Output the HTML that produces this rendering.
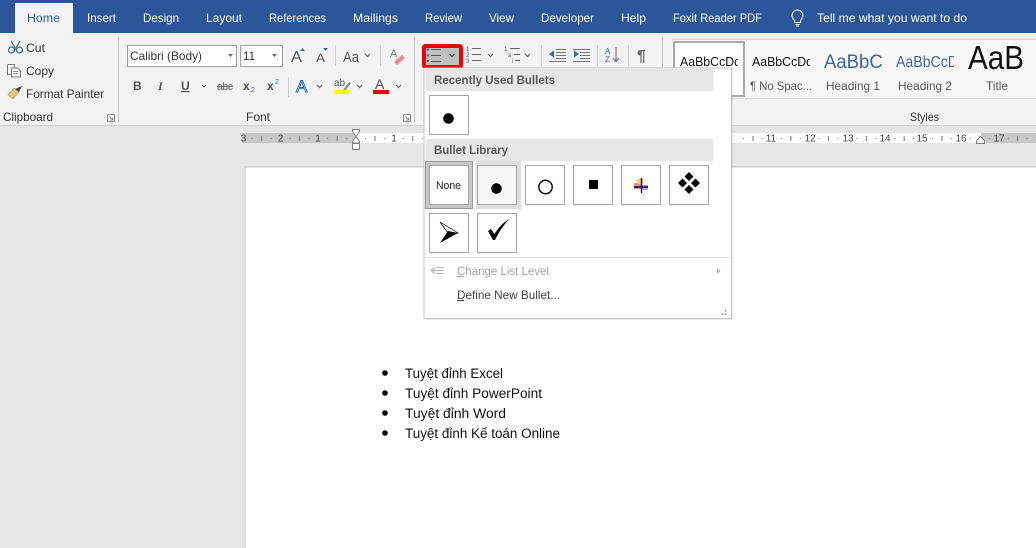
<!DOCTYPE html>
<html><head><meta charset="utf-8"><style>
html,body{margin:0;padding:0;background:#e6e6e6;overflow:hidden}
svg{display:block}
text{font-family:"Liberation Sans","DejaVu Sans",sans-serif;font-size:12px;fill:#444}
.w{fill:#fff}
.d{fill:#333}
.doc{font-size:13.5px;fill:#111}
.r{font-size:10px;fill:#444;text-anchor:middle}
.h{font-weight:bold;fill:#5a5a5a}
.c{fill:none;stroke:#666;stroke-width:1.2}
.cell{fill:#fff;stroke:#a6a6a6}
</style></head><body>
<svg width="1036" height="548" viewBox="0 0 1036 548" xmlns="http://www.w3.org/2000/svg">
<defs>
<pattern id="tk" patternUnits="userSpaceOnUse" x="356" y="133" width="37.8" height="10">
<rect x="9" y="5" width="1" height="1" fill="#777"/><rect x="18.5" y="3" width="1" height="5" fill="#777"/><rect x="28" y="5" width="1" height="1" fill="#777"/>
</pattern>
<clipPath id="g1"><rect x="676" y="44" width="62" height="50"/></clipPath>
<clipPath id="g2"><rect x="752" y="44" width="58" height="50"/></clipPath>
<clipPath id="g3"><rect x="824" y="44" width="58" height="50"/></clipPath>
<clipPath id="g4"><rect x="896" y="44" width="58" height="50"/></clipPath>
<clipPath id="g5"><rect x="964" y="45" width="62" height="50"/></clipPath>
</defs>

<!-- backgrounds -->
<rect width="1036" height="548" fill="#e6e6e6"/>
<rect width="1036" height="33" fill="#2b579a"/>
<rect y="33" width="1036" height="92" fill="#f3f3f3"/>
<rect y="125" width="1036" height="1" fill="#cfcfcf"/>
<rect x="15" y="3" width="58" height="31" fill="#f3f3f3"/>

<!-- tabs -->
<text x="27" y="22" textLength="33" lengthAdjust="spacingAndGlyphs" style="fill:#2b579a">Home</text>
<text class="w" x="87" y="22" textLength="29" lengthAdjust="spacingAndGlyphs">Insert</text>
<text class="w" x="143" y="22" textLength="36" lengthAdjust="spacingAndGlyphs">Design</text>
<text class="w" x="206" y="22" textLength="36" lengthAdjust="spacingAndGlyphs">Layout</text>
<text class="w" x="269" y="22" textLength="57" lengthAdjust="spacingAndGlyphs">References</text>
<text class="w" x="353" y="22" textLength="45" lengthAdjust="spacingAndGlyphs">Mailings</text>
<text class="w" x="425" y="22" textLength="37" lengthAdjust="spacingAndGlyphs">Review</text>
<text class="w" x="489" y="22" textLength="25" lengthAdjust="spacingAndGlyphs">View</text>
<text class="w" x="541" y="22" textLength="53" lengthAdjust="spacingAndGlyphs">Developer</text>
<text class="w" x="621" y="22" textLength="25" lengthAdjust="spacingAndGlyphs">Help</text>
<text class="w" x="673" y="22" textLength="89" lengthAdjust="spacingAndGlyphs">Foxit Reader PDF</text>
<path d="M794.500 20.500c-1-1.300-2.500-2.500-2.500-5a5.500 5.500 0 0 1 11 0c0 2.500-1.500 3.700-2.500 5v2h-6zM795.500 24.500h4M796 26h3" fill="none" stroke="#fff" stroke-width="1"/>
<text class="w" x="817" y="22" textLength="150" lengthAdjust="spacingAndGlyphs">Tell me what you want to do</text>

<!-- clipboard -->
<path d="M11 41l6 10M20 41l-6 10" stroke="#777" stroke-width="1.500" fill="none"/>
<circle cx="11.500" cy="50" r="3" fill="none" stroke="#2b6ca8" stroke-width="1.200"/>
<circle cx="19.500" cy="50" r="3" fill="none" stroke="#2b6ca8" stroke-width="1.200"/>
<text class="d" x="26" y="52" textLength="19" lengthAdjust="spacingAndGlyphs">Cut</text>
<path d="M7.500 64.500h7l0 3M7.500 64.500v10h4" fill="#fff" stroke="#777"/>
<path d="M11.500 68h6l3 3v6h-9z" fill="#fff" stroke="#777"/>
<path d="M13 71.500h5M13 73.500h5" stroke="#999"/>
<text class="d" x="26" y="75" textLength="28" lengthAdjust="spacingAndGlyphs">Copy</text>
<path d="M8 95l6-7 5 4-6 7z" fill="#e4c27a" stroke="#b89a5a" stroke-width=".6"/>
<path d="M15 89l7-3-3 6z" fill="#444"/>
<text class="d" x="26" y="98" textLength="78" lengthAdjust="spacingAndGlyphs">Format Painter</text>
<text x="3" y="121" textLength="50" lengthAdjust="spacingAndGlyphs" class="d">Clipboard</text>
<path d="M107.500 114.500h7v7h-7zM109.500 116.500l3.500 3.500M113 117.500v2.500h-2.500" fill="none" stroke="#777" stroke-width=".8"/>
<rect x="118" y="37" width="1" height="85" fill="#c8c8c8"/>

<!-- font group -->
<rect x="127.500" y="45.500" width="109" height="21" fill="#fff" stroke="#a0a0a0"/>
<text class="d" x="130" y="60" textLength="72" lengthAdjust="spacingAndGlyphs">Calibri (Body)</text>
<path d="M228 54h5l-2.500 3z" fill="#666"/>
<rect x="240.500" y="45.500" width="42" height="21" fill="#fff" stroke="#a0a0a0"/>
<text class="d" x="243" y="60" textLength="12" lengthAdjust="spacingAndGlyphs">11</text>
<path d="M272 54h5l-2.500 3z" fill="#666"/>
<text x="291" y="62" textLength="11" lengthAdjust="spacingAndGlyphs" style="font-size:16px;fill:#555">A</text>
<path d="M300 51h5l-2.500-3z" fill="#2b6ca8"/>
<text x="316" y="62" textLength="9" lengthAdjust="spacingAndGlyphs" style="font-size:12px;fill:#555">A</text>
<path d="M323 48h5l-2.500 3z" fill="#2b6ca8"/>
<rect x="335" y="45" width="1" height="21" fill="#d0d0d0"/>
<text x="343" y="62" textLength="16" lengthAdjust="spacingAndGlyphs" style="font-size:15px;fill:#555">Aa</text>
<path d="M365 54l2.500 2.500 2.500-2.500" class="c"/>
<rect x="380" y="45" width="1" height="21" fill="#d0d0d0"/>
<text x="390" y="57" style="font-size:11px;fill:#777">A</text>
<path d="M394 62l8-7 3 3-8 7z" fill="#e88a94"/>
<text x="133" y="90" style="font-size:12px;font-weight:bold;fill:#555">B</text>
<text x="158" y="90" style="font-size:12px;font-style:italic;font-family:'Liberation Serif',serif;font-weight:bold;fill:#555">I</text>
<text x="181" y="90" style="font-size:12px;font-weight:bold;fill:#555;text-decoration:underline">U</text>
<path d="M202 85l2 2 2-2" class="c"/>
<text x="217" y="90" textLength="16" lengthAdjust="spacingAndGlyphs" style="font-size:11px;fill:#666">abc</text>
<rect x="217" y="86" width="16" height="1" fill="#666"/>
<text x="243" y="90" style="font-size:12px;font-weight:bold;fill:#555">x</text>
<text x="251" y="92" style="font-size:7px;fill:#2b6ca8">2</text>
<text x="267" y="90" style="font-size:12px;font-weight:bold;fill:#555">x</text>
<text x="275" y="84" style="font-size:7px;fill:#2b6ca8">2</text>
<rect x="288" y="77" width="1" height="20" fill="#d0d0d0"/>
<text x="296" y="92" style="font-size:17px;fill:#cfe0f2;stroke:#2b6ca8;stroke-width:.9">A</text>
<path d="M317 85l2.500 2.500 2.500-2.500" class="c"/>
<text x="334" y="86" style="font-size:10px;fill:#555">ab</text>
<path d="M343 90l6-8 2 1-6 8z" fill="#888"/>
<rect x="334" y="90" width="16" height="4" fill="#ffff00"/>
<path d="M357 85l2.500 2.500 2.500-2.500" class="c"/>
<text x="375" y="89" style="font-size:14px;fill:#555">A</text>
<rect x="373" y="90" width="16" height="4" fill="#e00"/>
<path d="M396 85l2.500 2.500 2.500-2.500" class="c"/>
<text x="246" y="121" textLength="24" lengthAdjust="spacingAndGlyphs" class="d">Font</text>
<path d="M403.500 114.500h7v7h-7zM405.500 116.500l3.500 3.500M409 117.500v2.500h-2.500" fill="none" stroke="#777" stroke-width=".8"/>
<rect x="414" y="37" width="1" height="85" fill="#c8c8c8"/>

<!-- paragraph group -->
<path d="M472 48.500h9M472 54.500h9M472 60.500h9" stroke="#666" fill="none"/>
<text x="466" y="51" style="font-size:6px;fill:#2b6ca8">1</text><text x="466" y="57" style="font-size:6px;fill:#2b6ca8">2</text><text x="466" y="63" style="font-size:6px;fill:#2b6ca8">3</text>
<path d="M488 54l2.500 2.500 2.500-2.500" class="c"/>
<text x="504" y="51" style="font-size:6px;fill:#2b6ca8">1</text><text x="508" y="57" style="font-size:6px;fill:#8a4bb0">a</text><text x="512" y="63" style="font-size:6px;fill:#666">i</text>
<path d="M510 48.500h10M514 54.500h6M515 60.500h5" stroke="#666" fill="none"/>
<path d="M525 54l2.500 2.500 2.500-2.500" class="c"/>
<rect x="541" y="45" width="1" height="21" fill="#d0d0d0"/>
<path d="M556 49.500h10M556 52.500h10M556 55.500h10M556 58.500h10M549 61.500h17" stroke="#777" fill="none"/>
<path d="M549 54l5-3.500v7z" fill="#2b6ca8"/>
<path d="M573 49.500h17M580 52.500h10M580 55.500h10M580 58.500h10M573 61.500h17" stroke="#777" fill="none"/>
<path d="M579 54l-5-3.500v7z" fill="#2b6ca8"/>
<rect x="597" y="45" width="1" height="21" fill="#d0d0d0"/>
<text x="605" y="54" style="font-size:8px;fill:#2b6ca8">A</text><text x="605" y="62" style="font-size:8px;fill:#8a4bb0">Z</text>
<path d="M616 47v14M613 58l3 3.500 3-3.500" fill="none" stroke="#666"/>
<rect x="628" y="45" width="1" height="21" fill="#d0d0d0"/>
<text x="637" y="61" style="font-size:16px;font-weight:bold;fill:#666">¶</text>
<rect x="662" y="37" width="1" height="30" fill="#c8c8c8"/>

<!-- red bullet button -->
<rect x="424" y="46" width="37" height="21" rx="1.500" fill="#c0c0c0" stroke="#ee0000" stroke-width="4"/>
<path d="M431 49.500h10M431 55.500h10M431 61.500h10" stroke="#555" fill="none"/>
<circle cx="428" cy="49.500" r="1.200" fill="#2b6ca8"/><circle cx="428" cy="55.500" r="1.200" fill="#2b6ca8"/><circle cx="428" cy="61" r="1.200" fill="#2b6ca8"/>
<path d="M449.500 54l2.500 2.500 2.500-2.500" fill="none" stroke="#444" stroke-width="1.200"/>

<!-- styles gallery -->
<rect x="672" y="39" width="364" height="59" fill="#f8f8f8"/>
<path d="M672 39.500h364M672 98.500h364" stroke="#d8d8d8"/>
<rect x="674" y="42" width="70" height="54" fill="#fff" stroke="#a9a9a9" stroke-width="2"/>
<text clip-path="url(#g1)" x="680" y="66" textLength="61" lengthAdjust="spacingAndGlyphs" style="font-size:12.500px;fill:#111">AaBbCcDd</text>
<text clip-path="url(#g2)" x="752" y="66" textLength="61" lengthAdjust="spacingAndGlyphs" style="font-size:12.500px;fill:#111">AaBbCcDd</text>
<text clip-path="url(#g3)" x="824" y="68" textLength="68" lengthAdjust="spacingAndGlyphs" style="font-size:19px;fill:#3f64a6">AaBbCc</text>
<text clip-path="url(#g4)" x="896" y="67" textLength="62" lengthAdjust="spacingAndGlyphs" style="font-size:15.500px;fill:#3f64a6">AaBbCcD</text>
<text clip-path="url(#g5)" x="968" y="69" textLength="56" lengthAdjust="spacingAndGlyphs" style="font-size:33px;fill:#111">AaB</text>
<text x="750" y="90" textLength="62" lengthAdjust="spacingAndGlyphs" style="fill:#555">¶ No Spac...</text>
<text x="826" y="90" textLength="54" lengthAdjust="spacingAndGlyphs" style="fill:#555">Heading 1</text>
<text x="898" y="90" textLength="54" lengthAdjust="spacingAndGlyphs" style="fill:#555">Heading 2</text>
<text x="986" y="90" textLength="22" lengthAdjust="spacingAndGlyphs" style="fill:#555">Title</text>
<text x="910" y="121" textLength="29" lengthAdjust="spacingAndGlyphs" class="d">Styles</text>

<!-- ruler -->
<rect x="242" y="133" width="114" height="10" fill="#c8c8c8"/>
<rect x="356" y="133" width="625" height="10" fill="#fff"/>
<rect x="981" y="133" width="55" height="10" fill="#c8c8c8"/>
<rect x="242" y="133" width="794" height="10" fill="url(#tk)"/>
<g>
<text class="r" x="243.500" y="141.500">3</text><text class="r" x="280.500" y="141.500">2</text><text class="r" x="318" y="141.500">1</text>
<text class="r" x="394" y="141.500">1</text><text class="r" x="771" y="141.500">11</text><text class="r" x="810" y="141.500">12</text>
<text class="r" x="848" y="141.500">13</text><text class="r" x="885" y="141.500">14</text><text class="r" x="922" y="141.500">15</text>
<text class="r" x="961" y="141.500">16</text><text class="r" x="999" y="141.500">17</text>
</g>
<path d="M352.500 129.500h7v2l-3.500 5 3.500 5v1.500h-7v-1.500l3.500-5-3.500-5z" fill="#fff" stroke="#808080"/>
<rect x="352.500" y="143.500" width="7" height="6" fill="#fff" stroke="#808080"/>
<path d="M976.500 143.500v-3l4-4 4 4v3z" fill="#fff" stroke="#808080"/>

<!-- page -->
<rect x="245" y="167" width="800" height="390" fill="#fff" stroke="#c6c6c6"/>
<circle cx="385" cy="373" r="2.800" fill="#000"/>
<circle cx="385" cy="393" r="2.800" fill="#000"/>
<circle cx="385" cy="413" r="2.800" fill="#000"/>
<circle cx="385" cy="433" r="2.800" fill="#000"/>
<text class="doc" x="405" y="378" textLength="98" lengthAdjust="spacingAndGlyphs">Tuyệt đỉnh Excel</text>
<text class="doc" x="405" y="398" textLength="137" lengthAdjust="spacingAndGlyphs">Tuyệt đỉnh PowerPoint</text>
<text class="doc" x="405" y="418" textLength="101" lengthAdjust="spacingAndGlyphs">Tuyệt đỉnh Word</text>
<text class="doc" x="405" y="438" textLength="155" lengthAdjust="spacingAndGlyphs">Tuyệt đỉnh Kế toán Online</text>

<!-- menu -->
<rect x="425" y="70" width="308" height="250" fill="#000" opacity=".08"/>
<rect x="424" y="68" width="307.500" height="250.500" fill="#fff" stroke="#c6c6c6"/>
<rect x="426" y="69" width="287" height="22" fill="#e6e6e6"/>
<text class="h" x="434" y="84" textLength="121" lengthAdjust="spacingAndGlyphs">Recently Used Bullets</text>
<rect class="cell" x="429.500" y="95.500" width="39" height="39"/>
<circle cx="448.500" cy="118.500" r="5.300" fill="#000"/>
<rect x="426" y="139" width="287" height="22" fill="#e6e6e6"/>
<text class="h" x="434" y="154" textLength="74" lengthAdjust="spacingAndGlyphs">Bullet Library</text>

<rect x="425.500" y="161.500" width="47" height="47" fill="#c8c8c8" stroke="#999"/>
<rect x="476" y="161" width="45" height="48" fill="#dedede"/>
<rect class="cell" x="429.500" y="165.500" width="39" height="39"/>
<text x="436" y="189" textLength="25" lengthAdjust="spacingAndGlyphs" style="font-size:11px;fill:#222">None</text>
<rect x="477.500" y="165.500" width="39" height="39" fill="#f6f6f6" stroke="#a6a6a6"/>
<circle cx="496.500" cy="188.500" r="5.300" fill="#000"/>
<rect class="cell" x="525.500" y="165.500" width="39" height="39"/>
<circle cx="545.500" cy="187" r="6.700" fill="#fff" stroke="#000" stroke-width="1.400"/>
<rect class="cell" x="573.500" y="165.500" width="39" height="39"/>
<rect x="589" y="180" width="9" height="9" fill="#000"/>
<rect class="cell" x="621.500" y="165.500" width="39" height="39"/>
<rect x="634" y="183" width="7" height="6" fill="#f58a7a"/><rect x="637" y="179" width="6" height="5" fill="#ffd24a"/><rect x="641" y="185" width="7" height="5" fill="#b0a8e8"/>
<path d="M641.500 178v15M634 187h14" stroke="#00006a" stroke-width="1.400" fill="none"/>
<rect class="cell" x="669.500" y="165.500" width="39" height="39"/>
<path d="M689 173.500l4.500 4.500-4.500 4.500-4.500-4.500zM682.500 180l4.500 4.500-4.500 4.500-4.500-4.500zM695.500 180l4.500 4.500-4.500 4.500-4.500-4.500zM689 186.500l4.500 4.500-4.500 4.500-4.500-4.500z" fill="#000" transform="translate(0,-1.500)"/>
<rect class="cell" x="429.500" y="213.500" width="39" height="39"/>
<path d="M440 222l18 11-10 0z" fill="#fff" stroke="#000" stroke-width=".7"/>
<path d="M458 233l-18 10 8-12z" fill="#000"/>
<rect class="cell" x="477.500" y="213.500" width="39" height="39"/>
<path d="M488 231l3-2 3.500 5C498 228 503 223 509 219 503 226 499 232 495 240h-2z" fill="#000"/>
<rect x="425" y="257" width="306" height="1" fill="#e1e1e1"/>
<path d="M431 270.500h13M431 270.500l3-2.500v5zM436 267.500h8M436 273.500h8" stroke="#b5b5b5" fill="none"/>
<text x="457" y="275" textLength="92" lengthAdjust="spacingAndGlyphs" style="fill:#a6a6a6">Change List Level</text>
<rect x="457" y="276" width="7" height="1" fill="#a6a6a6"/>
<path d="M717 268l3.500 3-3.500 3z" fill="#b5b5b5"/>
<text x="457" y="299" textLength="103" lengthAdjust="spacingAndGlyphs" style="fill:#444">Define New Bullet...</text>
<rect x="457" y="300" width="7" height="1" fill="#444"/>
<path d="M725 310h1.500v1.500H725zM722 313.500h1.500v1.500H722zM725 313.500h1.500v1.500H725z" fill="#888"/>
</svg>
</body></html>
